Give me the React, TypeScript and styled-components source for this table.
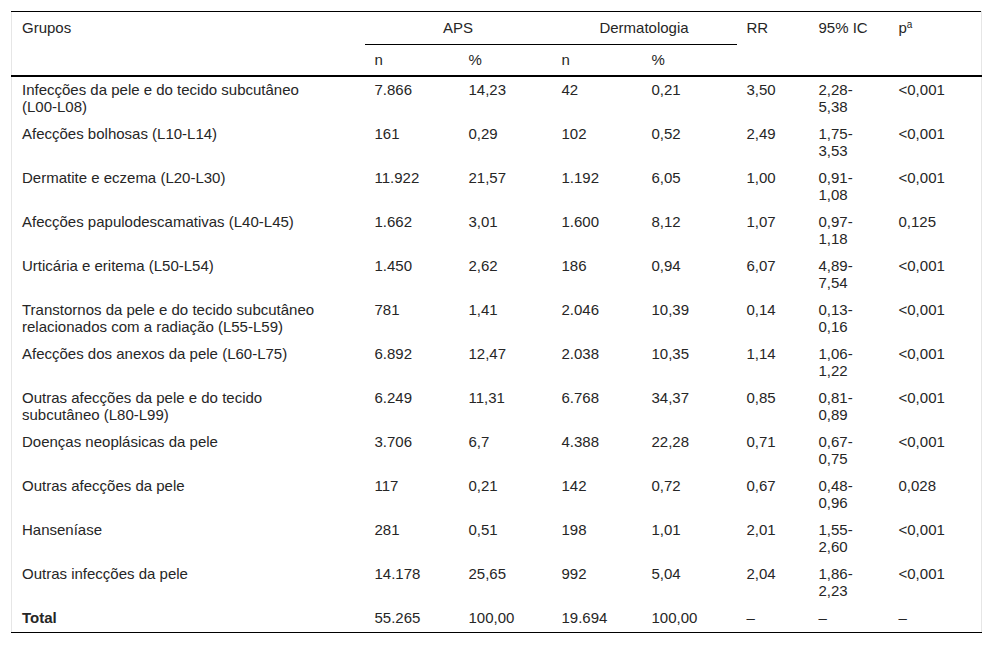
import React from 'react';
import styled, { createGlobalStyle } from 'styled-components';

const GlobalStyle = createGlobalStyle`
  body {
    margin: 0;
    background: #ffffff;
  }
`;

const Page = styled.div`
  padding: 11px 10px 0 11px;
  font-family: "Liberation Sans", Arial, sans-serif;
  font-size: 15px;
  line-height: 17px;
  color: #262626;
`;

const Table = styled.table`
  width: 971px;
  border-collapse: collapse;
  table-layout: fixed;
  border-top: 1px solid #000;
  border-left: 1px solid #e6e6e6;
  border-right: 1px solid #e6e6e6;
`;

const Head = styled.thead`
  border-bottom: 2px solid #000;
`;

const Body = styled.tbody`
  border-bottom: 1px solid #000;
`;

const HeadCell = styled.th<{ $center?: boolean; $underline?: boolean; $sub?: boolean }>`
  font-weight: normal;
  text-align: ${(p) => (p.$center ? 'center' : 'left')};
  vertical-align: top;
  padding: ${(p) => (p.$sub ? '6px 10px 7px' : '7px 10px 8px')};
  border-bottom: ${(p) => (p.$underline ? '1px solid #000' : 'none')};
`;

const Cell = styled.td<{ $padRight?: number; $bold?: boolean }>`
  vertical-align: top;
  padding: 4px ${(p) => p.$padRight ?? 10}px 6px 10px;
  font-weight: ${(p) => (p.$bold ? 'bold' : 'normal')};
`;

const Sup = styled.sup`
  font-size: 10px;
  line-height: 0;
  vertical-align: 5px;
`;

type Row = [string, string, string, string, string, string, string, string];

const rows: Row[] = [
  ['Infecções da pele e do tecido subcutâneo (L00-L08)', '7.866', '14,23', '42', '0,21', '3,50', '2,28-5,38', '<0,001'],
  ['Afecções bolhosas (L10-L14)', '161', '0,29', '102', '0,52', '2,49', '1,75-3,53', '<0,001'],
  ['Dermatite e eczema (L20-L30)', '11.922', '21,57', '1.192', '6,05', '1,00', '0,91-1,08', '<0,001'],
  ['Afecções papulodescamativas (L40-L45)', '1.662', '3,01', '1.600', '8,12', '1,07', '0,97-1,18', '0,125'],
  ['Urticária e eritema (L50-L54)', '1.450', '2,62', '186', '0,94', '6,07', '4,89-7,54', '<0,001'],
  ['Transtornos da pele e do tecido subcutâneo relacionados com a radiação (L55-L59)', '781', '1,41', '2.046', '10,39', '0,14', '0,13-0,16', '<0,001'],
  ['Afecções dos anexos da pele (L60-L75)', '6.892', '12,47', '2.038', '10,35', '1,14', '1,06-1,22', '<0,001'],
  ['Outras afecções da pele e do tecido subcutâneo (L80-L99)', '6.249', '11,31', '6.768', '34,37', '0,85', '0,81-0,89', '<0,001'],
  ['Doenças neoplásicas da pele', '3.706', '6,7', '4.388', '22,28', '0,71', '0,67-0,75', '<0,001'],
  ['Outras afecções da pele', '117', '0,21', '142', '0,72', '0,67', '0,48-0,96', '0,028'],
  ['Hanseníase', '281', '0,51', '198', '1,01', '2,01', '1,55-2,60', '<0,001'],
  ['Outras infecções da pele', '14.178', '25,65', '992', '5,04', '2,04', '1,86-2,23', '<0,001'],
];

const total: Row = ['Total', '55.265', '100,00', '19.694', '100,00', '–', '–', '–'];

const colWidths = [353, 94, 93, 90, 95, 72, 80, 93];

const renderRow = (row: Row, key: number, bold = false) => (
  <tr key={key}>
    {row.map((value, i) => (
      <Cell
        key={i}
        $bold={bold && i === 0}
        $padRight={i === 0 ? 30 : i === 6 ? 20 : undefined}
      >
        {value}
      </Cell>
    ))}
  </tr>
);

const App: React.FC = () => {
  return (
    <Page>
      <GlobalStyle />
      <Table>
        <colgroup>
          {colWidths.map((w, i) => (
            <col key={i} style={{ width: w }} />
          ))}
        </colgroup>
        <Head>
          <tr>
            <HeadCell rowSpan={2}>Grupos</HeadCell>
            <HeadCell colSpan={2} $center $underline>APS</HeadCell>
            <HeadCell colSpan={2} $center $underline>Dermatologia</HeadCell>
            <HeadCell rowSpan={2}>RR</HeadCell>
            <HeadCell rowSpan={2}>95% IC</HeadCell>
            <HeadCell rowSpan={2}>
              p<Sup>a</Sup>
            </HeadCell>
          </tr>
          <tr>
            <HeadCell $sub>n</HeadCell>
            <HeadCell $sub>%</HeadCell>
            <HeadCell $sub>n</HeadCell>
            <HeadCell $sub>%</HeadCell>
          </tr>
        </Head>
        <Body>
          {rows.map((row, i) => renderRow(row, i))}
          {renderRow(total, rows.length, true)}
        </Body>
      </Table>
    </Page>
  );
};

export default App;
